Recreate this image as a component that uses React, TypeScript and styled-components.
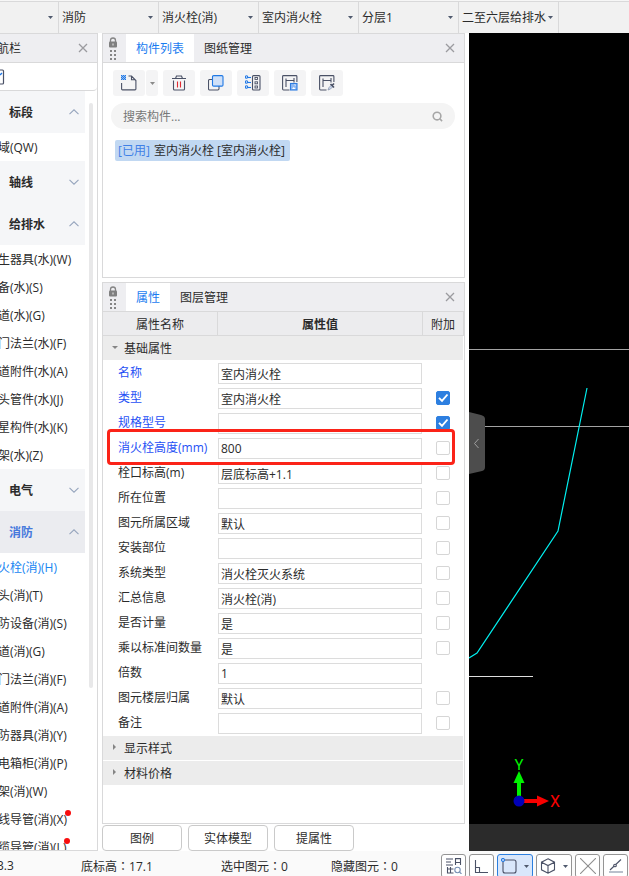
import React from "react";
import styled, { createGlobalStyle, css } from "styled-components";

const GlobalStyle = createGlobalStyle`
  *, *::before, *::after { box-sizing: border-box; }
  html, body { margin: 0; padding: 0; }
  body, button, input, select, table {
    font-family: "Open Sans", "Noto Sans CJK SC", sans-serif;
    font-size: 12px;
    color: #2b2b2b;
  }
  button { margin: 0; padding: 0; border: 0; background: none; }
  svg { display: block; }
`;

const LINE = "#d9d9da";

/* ---------- shell ---------- */

const Shell = styled.div`
  display: flex;
  flex-direction: column;
  height: 100vh;
  overflow: hidden;
  background: #fff;
`;

const ContextBar = styled.header`
  display: flex;
  flex: none;
  height: 33px;
  padding-top: 2px;
  background: linear-gradient(#f6f6f6 1px, ${LINE} 1px, ${LINE} 2px, #f1f1f1 2px);
`;

const ContextCell = styled.label<{ $width: number }>`
  display: grid;
  grid-template-columns: minmax(0, 1fr);
  align-items: center;
  flex: none;
  width: ${(p) => p.$width}px;
  border-right: 1px solid ${LINE};

  > * { grid-area: 1 / 1; }
  > svg { justify-self: end; margin-right: 5px; pointer-events: none; }
`;

const ContextSelect = styled.select`
  appearance: none;
  width: 100%;
  height: 100%;
  border: 0;
  border-radius: 0;
  padding: 0 8px 0 3px;
  background: transparent;
  outline: none;
`;

const Workspace = styled.div`
  display: grid;
  grid-template-columns: 98px 363px minmax(0, 1fr);
  grid-template-rows: minmax(0, 1fr);
  column-gap: 4px;
  flex: 1;
  min-height: 0;
`;

/* ---------- navigation ---------- */

const Sidebar = styled.nav`
  display: flex;
  flex-direction: column;
  min-height: 0;
  overflow: hidden;
  border: solid ${LINE};
  border-width: 1px 1px 1px 0;
`;

const PanelHead = styled.div`
  display: flex;
  align-items: stretch;
  flex: none;
  height: 29px;
  background: #eeeef1;
  border-bottom: 1px solid ${LINE};
`;

const SideTitle = styled.h2`
  flex: 1;
  margin: 0 0 0 -3px;
  font-size: 12px;
  font-weight: 400;
  line-height: 30px;
`;

const CloseButton = styled.button`
  display: grid;
  place-items: center;
  width: 28px;
  color: #9b9b9f;
`;

const FilterRow = styled.div`
  display: flex;
  align-items: center;
  flex: none;
  height: 28px;
  border-bottom: 1px solid ${LINE};
  border-radius: 0 0 4px 0;
`;

const NavScroll = styled.div`
  display: grid;
  grid-template-columns: minmax(0, 1fr) 12px;
  flex: 1;
  min-height: 0;
  overflow: hidden;
`;

const NavList = styled.div`
  min-width: 0;
`;

const ScrollThumb = styled.div`
  width: 4px;
  height: 76%;
  margin: 12px 0 0 4px;
  border-radius: 2px;
  background: #e8e8e9;
`;

const NavSection = styled.button<{ $active?: boolean }>`
  display: flex;
  align-items: center;
  justify-content: space-between;
  width: 100%;
  height: 42px;
  padding: 0 6px 0 9px;
  font-weight: 700;
  background: #f5f6f8;
  ${(p) => p.$active && css`background: #ebecf0; color: #4679dc;`}
`;

const NavItem = styled.a<{ $active?: boolean }>`
  display: block;
  margin-left: -2px;
  height: 28px;
  line-height: 30px;
  white-space: nowrap;
  text-decoration: none;
  color: ${(p) => (p.$active ? "#1785f2" : "#2b2b2b")};
`;

const NavText = styled.span`
  display: inline-block;
  position: relative;
`;

const RedDot = styled.i`
  position: absolute;
  top: 5px;
  right: -4px;
  width: 6px;
  height: 6px;
  border-radius: 50%;
  background: #f80d0d;
`;

/* ---------- docked panels ---------- */

const Dock = styled.main`
  display: grid;
  grid-template-rows: minmax(0, 245fr) 4px minmax(0, 542fr) 1px 26px;
  min-height: 0;
`;

const Panel = styled.section<{ $row: number }>`
  grid-row: ${(p) => p.$row};
  display: flex;
  flex-direction: column;
  min-height: 0;
  border: 1px solid ${LINE};
`;

const Grip = styled.span`
  display: flex;
  justify-content: center;
  width: 23px;
  padding: 3px 3px 0 0;
`;

const Tabs = styled.div`
  display: flex;
  flex: 1;
`;

const Tab = styled.button<{ $active?: boolean }>`
  padding: 0 10px;
  ${(p) => p.$active && css`background: #fff; color: #1a7cf0;`}
`;

const ToolRow = styled.div`
  display: flex;
  gap: 5px;
  padding: 7px 10px;
`;

const SplitTool = styled.div`
  display: flex;
  gap: 1px;
`;

const ToolButton = styled.button<{ $narrow?: boolean }>`
  display: grid;
  place-items: center;
  width: ${(p) => (p.$narrow ? 12 : 32)}px;
  height: 26px;
  border-radius: 3px;
  background: #f4f4f5;
`;

const SearchBox = styled.label`
  display: flex;
  align-items: center;
  flex: none;
  height: 26px;
  margin: 0 9px 0 8px;
  padding: 0 12px;
  border-radius: 13px;
  background: #f4f4f4;
`;

const SearchInput = styled.input`
  flex: 1;
  min-width: 0;
  padding: 0;
  border: 0;
  outline: none;
  background: transparent;
  &::placeholder { color: #777; opacity: 1; }
`;

const ComponentList = styled.ul`
  list-style: none;
  margin: 11px 12px;
  padding: 0;
`;

const ComponentItem = styled.li`
  width: fit-content;
  padding: 0 5px 0 3px;
  border-radius: 2px;
  line-height: 21px;
  background: #c1d8f2;
  white-space: pre;
`;

const UsedMark = styled.span`
  margin-right: 1px;
  color: #3f80e6;
`;

/* ---------- property grid ---------- */

const PropTable = styled.table`
  width: 100%;
  table-layout: fixed;
  border-collapse: separate;
  border-spacing: 0;
  td, th { padding: 0; height: 25px; font-weight: 400; text-align: left; }
`;

const HeadCell = styled.th<{ $bold?: boolean }>`
  && {
    height: 24px;
    text-align: center;
    font-weight: ${(p) => (p.$bold ? 600 : 400)};
    background: #ececee;
    border-right: 1px solid ${LINE};
    border-bottom: 1px solid ${LINE};
  }
`;

const GroupToggle = styled.button`
  display: flex;
  align-items: center;
  gap: 6px;
  width: calc(100% - 1px);
  height: 24px;
  margin-bottom: 1px;
  padding-left: 9px;
  background: #ececec;
`;

const PropRow = styled.tr`
  position: relative;
`;

const PropName = styled.label<{ $key?: boolean }>`
  display: block;
  padding-left: 15px;
  line-height: 20px;
  margin-bottom: 1px;
  white-space: nowrap;
  color: ${(p) => (p.$key ? "#1f50f5" : "#2b2b2b")};
`;

const PropInput = styled.input`
  display: block;
  width: calc(100% - 1px);
  height: 21px;
  padding: 0 2px;
  border: 1px solid #dcdcdc;
  border-radius: 0;
  outline: none;
  background: #fff;
`;

const CheckWrap = styled.span`
  display: grid;
  width: 14px;
  height: 14px;
  margin: 0 0 1px 13px;
  > * { grid-area: 1 / 1; }
  > svg { pointer-events: none; }
`;

const CheckInput = styled.input`
  appearance: none;
  width: 14px;
  height: 14px;
  margin: 0;
  border: 1px solid #d6d6d6;
  border-radius: 2px;
  background: #fff;
  &:checked { background: #2d7fe0; border-color: #2d7fe0; }
`;

const Highlight = styled.span`
  position: absolute;
  z-index: 1;
  top: -7px;
  bottom: -4px;
  left: 4px;
  right: 9px;
  border: 3px solid #fb2318;
  border-radius: 4px;
  pointer-events: none;
`;

const ActionRow = styled.div`
  grid-row: 5;
  display: flex;
  gap: 6px;
`;

const ActionButton = styled.button`
  width: 80px;
  border: 1px solid #cacaca;
  border-radius: 4px;
  background: #fff;
`;

/* ---------- drawing area ---------- */

const Viewport = styled.section`
  position: relative;
  display: flex;
  flex-direction: column;
  min-width: 0;
  min-height: 0;
  background: #000;
`;

const Drawing = styled.svg`
  flex: 1;
  width: 100%;
  min-height: 0;
`;

const CommandStrip = styled.div`
  flex: none;
  height: 27px;
  background: #2b2b2b;
`;

const CollapseHandle = styled.button`
  position: absolute;
  left: 0;
  top: 379px;
`;

/* ---------- status bar ---------- */

const StatusBar = styled.footer`
  display: flex;
  flex: none;
  height: 25px;
  overflow: hidden;
  background: #fafafa;
`;

const StatusInfo = styled.div`
  display: grid;
  grid-template-columns: 84px 140px 110px 110px;
  width: 441px;
  margin-left: -3px;
  line-height: 30px;
  white-space: nowrap;
`;

const Colon = styled.span`
  font-family: "Noto Sans CJK TC", sans-serif;
`;

const StatusTools = styled.div`
  display: flex;
  gap: 3px;
  margin-left: 3px;
  padding-top: 3px;
`;

const StatusButton = styled.button<{ $active?: boolean; $wide?: boolean }>`
  display: flex;
  flex: none;
  align-items: center;
  justify-content: ${(p) => (p.$wide ? "space-between" : "center")};
  width: ${(p) => (p.$wide ? 36 : 25)}px;
  height: 24px;
  padding: ${(p) => (p.$wide ? "0 3px" : "0")};
  border: 1px solid ${(p) => (p.$active ? "#2c7fdf" : "#949494")};
  border-radius: 3px;
  background: ${(p) => (p.$active ? "#d9e7fb" : "#fff")};
`;

/* ---------- icons ---------- */

const INK = "#4a5166";

const Caret = ({ color = "#505a6e" }: { color?: string }) => (
  <svg width="5" height="3" viewBox="0 0 5 3"><path d="M0 0h5L2.5 3z" fill={color} /></svg>
);

const CloseIcon = () => (
  <svg width="10" height="10" viewBox="0 0 10 10" fill="none" stroke="currentColor" strokeWidth="1.3">
    <path d="M1 1l8 8M9 1L1 9" />
  </svg>
);

const Chevron = ({ up }: { up?: boolean }) => (
  <svg width="10" height="6" viewBox="0 0 10 6" fill="none" stroke="#96a5bd" strokeWidth="1.1">
    <path d={up ? "M.5 5.2L5 .8l4.5 4.4" : "M.5.8L5 5.2 9.5.8"} />
  </svg>
);

const GripIcon = () => (
  <svg width="10" height="24" viewBox="0 0 10 24">
    <path d="M2.500 5V3.500a2.500 2.500 0 0 1 5 0V5" fill="none" stroke="#858585" strokeWidth="1.300" />
    <rect x="1" y="4.500" width="8" height="6" rx="1" fill="#808080" />
    <rect x="4.500" y="6.500" width="1" height="2" fill="#eee" />
    {[13, 17, 21].map((y) => (
      <g key={y} fill="#858585">
        <rect x="2" y={y} width="2" height="2" />
        <rect x="6" y={y} width="2" height="2" />
      </g>
    ))}
  </svg>
);

const Glyph = ({ children }: { children: React.ReactNode }) => (
  <svg width="16" height="16" viewBox="0 0 16 16" fill="none" stroke={INK} strokeWidth="1.100">{children}</svg>
);

const NewIcon = () => (
  <Glyph>
    <path d="M.6 8v6q0 .9.9.9h12.500q.9 0 .9-.9V5.500L10.500 1H7.500M10.500 1v3.700h4" />
    <g fill="#2078e6" stroke="none">
      {[0, 1, 2, 3, 4].map((r) =>
        [0, 1, 2, 3, 4].filter((c) => (r + c) % 2 === 0).map((c) => <rect key={`${r}-${c}`} x={c} y={r} width="1" height="1" />)
      )}
      <rect width="5" height="5" opacity=".45" />
    </g>
  </Glyph>
);

const TrashIcon = () => (
  <Glyph>
    <path d="M1 3.500h14M4.500 3.500l1-2.500h5l1 2.500M2.500 5.500v8.500q0 1 1 1h9q1 0 1-1V5.500" />
    <path d="M6.500 6.500v6M9.500 6.500v6" stroke="#e02b33" />
  </Glyph>
);

const CopyIcon = () => (
  <Glyph>
    <rect x=".5" y="4.500" width="10.500" height="10.500" rx="1.200" />
    <rect x="4.500" y=".6" width="10.500" height="10.500" rx="1.200" fill="#cfe0f8" stroke="#1f78e4" />
  </Glyph>
);

const TreeIcon = () => (
  <Glyph>
    <g stroke="#2078e6">
      {[2, 7, 12].map((y) => (
        <g key={y}><circle cx="1.500" cy={y} r="1.200" /><path d={`M3 ${y + 0.5}h3`} /></g>
      ))}
    </g>
    <rect x="7.500" y=".6" width="7.500" height="14.400" rx="1" />
    <g strokeWidth=".9">
      <rect x="10" y="2.500" width="2.500" height="2" />
      <rect x="10" y="6.800" width="2.500" height="2" />
      <rect x="10" y="11" width="2.500" height="2" />
    </g>
  </Glyph>
);

const FramePart = () => (
  <path d="M7.500 15h-6q-.9 0-.9-.9v-12.600q0-.9.900-.9h12.500q.9 0 .9.900V7M4 12V3.500M4 5.500h8M12 3v4.500" />
);

const SaveIcon = () => (
  <Glyph>
    <FramePart />
    <rect x="8.500" y="8.500" width="6.500" height="6.500" fill="#8db8f3" stroke="#2f7de0" />
    <path d="M10 14l1.800-2 1.800 2zM12 9.500h1.500v1.500z" fill="#fff" stroke="none" />
  </Glyph>
);

const PickIcon = () => (
  <Glyph>
    <FramePart />
    <path d="M9 15l1-2.500 2.500-2.500 1.500 1.500-2.500 2.500z" fill="#c8d6ec" stroke="#8a96ad" strokeWidth=".8" />
    <path d="M11.500 9l3.500 3.500M13 10.500l2-2" strokeWidth="1.700" />
  </Glyph>
);

const SearchIcon = () => (
  <svg width="11" height="11" viewBox="0 0 12 12" fill="none" stroke="#a6a6a6" strokeWidth="1.700">
    <circle cx="5.500" cy="5.500" r="4.200" /><path d="M8.500 8.500l2.500 2.500" />
  </svg>
);

const TickIcon = () => (
  <svg width="14" height="14" viewBox="0 0 14 14" fill="none" stroke="#fff" strokeWidth="1.900">
    <path d="M3 6.800l3 3L11.500 3.500" />
  </svg>
);

/* ---------- data ---------- */

const contexts = ["", "消防", "消火栓(消)", "室内消火栓", "分层1", "二至六层给排水"];

type Section = { title: string; open: boolean; active?: boolean; items: string[] };

const sections: Section[] = [
  { title: "标段", open: true, items: ["域(QW)"] },
  { title: "轴线", open: false, items: [] },
  {
    title: "给排水", open: true,
    items: ["生器具(水)(W)", "备(水)(S)", "道(水)(G)", "门法兰(水)(F)", "道附件(水)(A)", "头管件(水)(J)", "星构件(水)(K)", "架(水)(Z)"],
  },
  { title: "电气", open: false, items: [] },
  {
    title: "消防", open: true, active: true,
    items: ["火栓(消)(H)", "头(消)(T)", "防设备(消)(S)", "道(消)(G)", "门法兰(消)(F)", "道附件(消)(A)", "防器具(消)(Y)", "电箱柜(消)(P)", "架(消)(W)", "线导管(消)(X)", "缆导管(消)(L)"],
  },
];

const flagged = ["线导管(消)(X)", "缆导管(消)(L)"];

type Prop = { name: string; value: string; key?: boolean; extra?: boolean; mark?: boolean };

const props: Prop[] = [
  { name: "名称", value: "室内消火栓", key: true },
  { name: "类型", value: "室内消火栓", key: true, extra: true },
  { name: "规格型号", value: "", key: true, extra: true },
  { name: "消火栓高度(mm)", value: "800", key: true, extra: false, mark: true },
  { name: "栓口标高(m)", value: "层底标高+1.1", extra: false },
  { name: "所在位置", value: "", extra: false },
  { name: "图元所属区域", value: "默认", extra: false },
  { name: "安装部位", value: "", extra: false },
  { name: "系统类型", value: "消火栓灭火系统", extra: false },
  { name: "汇总信息", value: "消火栓(消)", extra: false },
  { name: "是否计量", value: "是", extra: false },
  { name: "乘以标准间数量", value: "是", extra: false },
  { name: "倍数", value: "1" },
  { name: "图元楼层归属", value: "默认", extra: false },
  { name: "备注", value: "", extra: false },
];

/* ---------- parts ---------- */

const Head = ({ tabs }: { tabs: string[] }) => (
  <PanelHead>
    <Grip><GripIcon /></Grip>
    <Tabs role="tablist">
      {tabs.map((t, i) => <Tab key={t} role="tab" aria-selected={i === 0} $active={i === 0}>{t}</Tab>)}
    </Tabs>
    <CloseButton aria-label="关闭"><CloseIcon /></CloseButton>
  </PanelHead>
);

const GroupRow = ({ title, open }: { title: string; open?: boolean }) => (
  <tr>
    <th colSpan={3} scope="rowgroup">
      <GroupToggle aria-expanded={!!open}>
        <svg width="6" height="8" viewBox="0 0 6 8">
          <path d={open ? "M0 2h6L3 5z" : "M1 0v6l3-3z"} fill="#858585" />
        </svg>
        {title}
      </GroupToggle>
    </th>
  </tr>
);

const PropertyLine = ({ prop, index }: { prop: Prop; index: number }) => (
  <PropRow>
    <td>
      <PropName htmlFor={`prop-${index}`} $key={prop.key}>{prop.name}</PropName>
      {prop.mark && <Highlight />}
    </td>
    <td><PropInput id={`prop-${index}`} defaultValue={prop.value} /></td>
    <td>
      {prop.extra !== undefined && (
        <CheckWrap>
          <CheckInput type="checkbox" defaultChecked={prop.extra} aria-label={`附加 ${prop.name}`} />
          {prop.extra && <TickIcon />}
        </CheckWrap>
      )}
    </td>
  </PropRow>
);

export default function App() {
  return (
    <Shell>
      <GlobalStyle />
      <ContextBar>
        {contexts.map((c, i) => (
          <ContextCell key={i} $width={i === 0 ? 59 : 100}>
            <ContextSelect aria-label={c || "楼层"} defaultValue={c}><option value={c}>{c}</option></ContextSelect>
            <Caret />
          </ContextCell>
        ))}
      </ContextBar>

      <Workspace>
        <Sidebar>
          <PanelHead>
            <SideTitle>航栏</SideTitle>
            <CloseButton aria-label="关闭"><CloseIcon /></CloseButton>
          </PanelHead>
          <FilterRow>
            <svg width="5" height="16" viewBox="0 0 5 16" fill="none">
              <path d="M0 1h2.500q1 0 1 1v12q0 1-1 1H0" stroke={INK} strokeWidth="1.200" />
              <path d="M0 6l2-2" stroke="#2078e6" strokeWidth="1.500" />
            </svg>
          </FilterRow>
          <NavScroll>
            <NavList>
              {sections.map((s) => (
                <React.Fragment key={s.title}>
                  <NavSection $active={s.active} aria-expanded={s.open}>
                    {s.title}
                    <Chevron up={s.open} />
                  </NavSection>
                  {s.items.map((item) => (
                    <NavItem key={item} href="#" $active={item === "火栓(消)(H)"}>
                      <NavText>{item}{flagged.includes(item) && <RedDot />}</NavText>
                    </NavItem>
                  ))}
                </React.Fragment>
              ))}
            </NavList>
            <ScrollThumb />
          </NavScroll>
        </Sidebar>

        <Dock>
          <Panel $row={1}>
            <Head tabs={["构件列表", "图纸管理"]} />
            <ToolRow>
              <SplitTool>
                <ToolButton aria-label="新建"><NewIcon /></ToolButton>
                <ToolButton $narrow aria-label="新建选项"><Caret color="#8a8a8a" /></ToolButton>
              </SplitTool>
              <ToolButton aria-label="删除"><TrashIcon /></ToolButton>
              <ToolButton aria-label="复制"><CopyIcon /></ToolButton>
              <ToolButton aria-label="层间复制"><TreeIcon /></ToolButton>
              <ToolButton aria-label="存档"><SaveIcon /></ToolButton>
              <ToolButton aria-label="提取"><PickIcon /></ToolButton>
            </ToolRow>
            <SearchBox>
              <SearchInput type="text" placeholder="搜索构件..." aria-label="搜索构件" />
              <SearchIcon />
            </SearchBox>
            <ComponentList>
              <ComponentItem><UsedMark>[已用]</UsedMark> 室内消火栓 [室内消火栓]</ComponentItem>
            </ComponentList>
          </Panel>

          <Panel $row={3}>
            <Head tabs={["属性", "图层管理"]} />
            <PropTable>
              <colgroup><col width="115" /><col /><col width="41" /></colgroup>
              <thead>
                <tr>
                  <HeadCell scope="col">属性名称</HeadCell>
                  <HeadCell scope="col" $bold>属性值</HeadCell>
                  <HeadCell scope="col">附加</HeadCell>
                </tr>
              </thead>
              <tbody>
                <GroupRow title="基础属性" open />
                {props.map((p, i) => <PropertyLine key={p.name} prop={p} index={i} />)}
                <GroupRow title="显示样式" />
                <GroupRow title="材料价格" />
              </tbody>
            </PropTable>
          </Panel>

          <ActionRow>
            <ActionButton>图例</ActionButton>
            <ActionButton>实体模型</ActionButton>
            <ActionButton>提属性</ActionButton>
          </ActionRow>
        </Dock>

        <Viewport>
          <Drawing fill="none">
            <path d="M0 316.500h4000M0 393.500h4000" stroke="#a3a3a3" />
            <path d="M0 643.500h64" stroke="#dedede" />
            <path d="M118 355L89 498 8 620 0 625" stroke="#00f0f0" strokeWidth="1.200" />
            <rect x="48" y="749" width="4" height="15" fill="#00f200" />
            <path d="M50 738l5.500 12h-11z" fill="#00f200" />
            <rect x="54" y="766" width="15" height="4" fill="#f80000" />
            <path d="M80 768l-12 5.500v-11z" fill="#f80000" />
            <circle cx="50" cy="768" r="5.500" fill="#0000b8" />
            <text x="50" y="737" textAnchor="middle" fontSize="15" fontFamily="Roboto, sans-serif" fill="#00f200">Y</text>
            <text x="86" y="774" textAnchor="middle" fontSize="16" fontFamily="Roboto, sans-serif" fill="#f80000">X</text>
          </Drawing>
          <CommandStrip />
          <CollapseHandle aria-label="收起面板">
            <svg width="16" height="62" viewBox="0 0 16 62" fill="none">
              <path d="M0 0l12 3q4 1 4 4v48q0 3-3 4L0 62z" fill="#4d4d4d" />
              <path d="M9.500 27L5.500 31.500 9.500 36" stroke="#a0a0a0" />
            </svg>
          </CollapseHandle>
        </Viewport>
      </Workspace>

      <StatusBar>
        <StatusInfo>
          <span>3.3</span>
          <span>底标高<Colon>：</Colon>17.1</span>
          <span>选中图元<Colon>：</Colon>0</span>
          <span>隐藏图元<Colon>：</Colon>0</span>
        </StatusInfo>
        <StatusTools>
          <StatusButton aria-label="查找图元">
            <Glyph>
              <path d="M0 1h7M0 4h5M0 7h7M9.500 7V.6h5V7M9.500 4.500h5M1.500 9v6.500M1.500 11h6M4.500 9v6.500M1.500 15h6" />
              <circle cx="11.500" cy="12" r="2.700" stroke="#7890b4" /><path d="M13.500 14l2 2" stroke="#7890b4" />
            </Glyph>
          </StatusButton>
          <StatusButton aria-label="正交">
            <Glyph><path d="M1.500 2v12.500H14M1.500 9.500h4v5" /></Glyph>
          </StatusButton>
          <StatusButton $active $wide aria-label="选择方式">
            <Glyph>
              <rect x="2" y="2" width="13" height="13" rx="2" />
              <circle cx="2" cy="2" r="1.500" fill="#d9e7fb" stroke="#1f78e4" />
            </Glyph>
            <Caret />
          </StatusButton>
          <StatusButton $wide aria-label="视图">
            <Glyph><path d="M8 .8l6.500 3.400v7.600L8 15.200l-6.500-3.400V4.200zM1.500 4.200L8 7.600l6.500-3.400M8 7.600v7.600" /></Glyph>
            <Caret />
          </StatusButton>
          <StatusButton aria-label="交点">
            <Glyph><path d="M0 0l16 16M16 0L0 16" stroke="#8f8f8f" /><rect x="7" y="7" width="2" height="2" fill="#8f8f8f" stroke="none" /></Glyph>
          </StatusButton>
          <StatusButton aria-label="垂点">
            <Glyph><path d="M2 12L13 1.500" /><circle cx="7" cy="7.500" r="1.300" fill="#fff" /><path d="M1 14h14" stroke="#b9c0cc" strokeWidth="2" /></Glyph>
          </StatusButton>
        </StatusTools>
      </StatusBar>
    </Shell>
  );
}
